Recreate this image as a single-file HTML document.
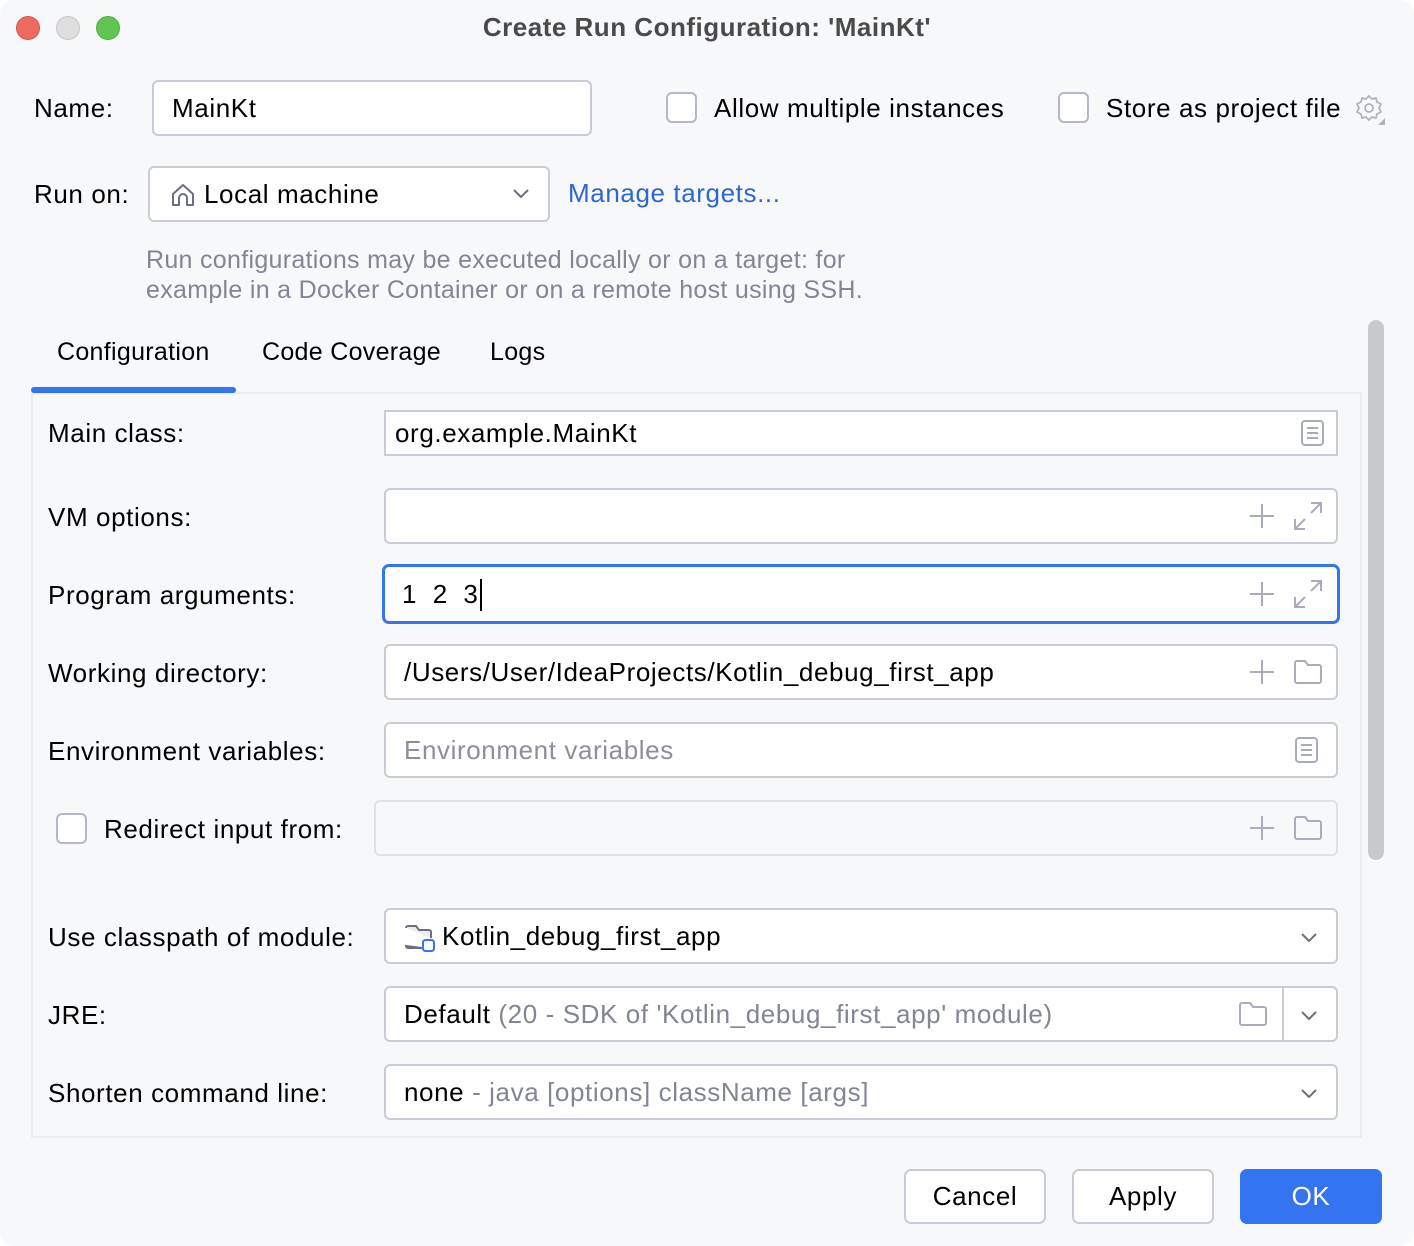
<!DOCTYPE html>
<html><head><meta charset="utf-8">
<style>
*{box-sizing:border-box;margin:0;padding:0}
html,body{width:1414px;height:1246px;background:#fff;overflow:hidden}
body{font-family:"Liberation Sans",Arial,sans-serif;font-size:26px;letter-spacing:0.6px;color:#000}
#win{position:absolute;left:0;top:0;width:1414px;height:1246px;background:#f7f8fa;border-radius:14px;overflow:hidden}
.a{position:absolute;white-space:nowrap}
.lbl{position:absolute;white-space:nowrap;line-height:30px}
.f{position:absolute;background:#fff;border:2px solid #c9ccd6;border-radius:6px}
.ft{position:absolute;left:18px;top:0;line-height:50px;white-space:nowrap}
.cb{position:absolute;width:31px;height:31px;border:2px solid #b4b8c6;border-radius:6px;background:#fff}
.g{color:#818594}
.btn{position:absolute;top:1169px;width:142px;height:55px;border:2px solid #c9ccd6;border-radius:7px;background:#fff;text-align:center;line-height:51px}
svg{position:absolute}
.tab{font-size:25px;letter-spacing:0.3px}
</style></head><body>
<div id="win">
<div class="a" style="left:16px;top:16px;width:24px;height:24px;border-radius:50%;background:#ec6a5e;border:1px solid #d25548"></div>
<div class="a" style="left:56px;top:16px;width:24px;height:24px;border-radius:50%;background:#dfdfe0;border:1px solid #c8c8ca"></div>
<div class="a" style="left:96px;top:16px;width:24px;height:24px;border-radius:50%;background:#61c554;border:1px solid #4fae44"></div>
<div class="a" style="left:0;width:1414px;top:12px;text-align:center;font-weight:bold;font-size:26px;letter-spacing:0.5px;color:#4a4a4a;line-height:30px">Create Run Configuration: 'MainKt'</div>

<div class="lbl" style="left:34px;top:93px">Name:</div>
<div class="f" style="left:152px;top:80px;width:440px;height:56px"><div class="ft" style="line-height:52px">MainKt</div></div>
<div class="cb" style="left:666px;top:92px"></div>
<div class="lbl" style="left:714px;top:93px">Allow multiple instances</div>
<div class="cb" style="left:1058px;top:92px"></div>
<div class="lbl" style="left:1106px;top:93px">Store as project file</div>
<svg style="left:1352px;top:92px" width="34" height="34" viewBox="0 0 34 34"><path d="M17 4l3 3 4-1 1 4 4 2-2 4 2 4-4 2-1 4-4-1-3 3-3-3-4 1-1-4-4-2 2-4-2-4 4-2 1-4 4 1z" fill="none" stroke="#b0b3bc" stroke-width="1.8" stroke-linejoin="round"/><circle cx="17" cy="16" r="4" fill="none" stroke="#b0b3bc" stroke-width="1.8"/><path d="M33 26v7h-7z" fill="#b0b3bc"/></svg>

<div class="lbl" style="left:34px;top:179px">Run on:</div>
<div class="f" style="left:148px;top:166px;width:402px;height:56px">
<svg style="left:20px;top:14px" width="26" height="26" viewBox="0 0 26 26"><path d="M3 12L13 3l10 9v11h-6v-7a4 4 0 0 0-8 0v7H3z" fill="none" stroke="#6c707e" stroke-width="2" stroke-linejoin="round"/></svg>
<div class="ft" style="left:54px;line-height:52px">Local machine</div>
<svg style="left:362px;top:20px" width="18" height="12" viewBox="0 0 18 12"><path d="M2 2l7 7 7-7" fill="none" stroke="#6c707e" stroke-width="2"/></svg>
</div>
<div class="lbl" style="left:568px;top:178px;color:#2f66d0">Manage targets...</div>
<div class="lbl g" style="left:146px;top:245px;font-size:25px;letter-spacing:0.3px">Run configurations may be executed locally or on a target: for</div>
<div class="lbl g" style="left:146px;top:275px;font-size:25px;letter-spacing:0.3px">example in a Docker Container or on a remote host using SSH.</div>

<div class="lbl tab" style="left:57px;top:337px">Configuration</div>
<div class="lbl tab" style="left:262px;top:337px">Code Coverage</div>
<div class="lbl tab" style="left:490px;top:337px">Logs</div>
<div class="a" style="left:31px;top:392px;width:1331px;height:746px;border:2px solid #ebecf0"></div>
<div class="a" style="left:31px;top:387px;width:205px;height:6px;background:#3574f0;border-radius:3px"></div>
<div class="a" style="left:1368px;top:320px;width:16px;height:540px;background:#c8c9cc;border-radius:8px"></div>

<div class="lbl" style="left:48px;top:418px">Main class:</div>
<div class="f" style="left:384px;top:410px;width:954px;height:46px;border-radius:0"><div class="ft" style="left:9px;line-height:42px">org.example.MainKt</div>
<svg style="left:914px;top:7px" width="26" height="28" viewBox="0 0 26 28"><rect x="2" y="2" width="21" height="24" rx="3" fill="none" stroke="#a8adbd" stroke-width="2"/><path d="M7 9h11M7 14h11M7 19h11" stroke="#a8adbd" stroke-width="2"/></svg></div>

<div class="lbl" style="left:48px;top:502px">VM options:</div>
<div class="f" style="left:384px;top:488px;width:954px;height:56px"></div>

<div class="lbl" style="left:48px;top:580px">Program arguments:</div>
<div class="f" style="left:382px;top:564px;width:958px;height:60px;border:3px solid #3574f0;border-radius:7px"><div class="ft" style="left:17px;line-height:54px">1&nbsp;&nbsp;2&nbsp;&nbsp;3</div><div class="a" style="left:95px;top:12px;width:2px;height:32px;background:#000"></div></div>

<div class="lbl" style="left:48px;top:658px">Working directory:</div>
<div class="f" style="left:384px;top:644px;width:954px;height:56px"><div class="ft" style="line-height:52px">/Users/User/IdeaProjects/Kotlin_debug_first_app</div></div>

<div class="lbl" style="left:48px;top:736px">Environment variables:</div>
<div class="f" style="left:384px;top:722px;width:954px;height:56px"><div class="ft" style="line-height:52px;color:#8c8f99">Environment variables</div>
<svg style="left:908px;top:12px" width="26" height="28" viewBox="0 0 26 28"><rect x="2" y="2" width="21" height="24" rx="3" fill="none" stroke="#a8adbd" stroke-width="2"/><path d="M7 9h11M7 14h11M7 19h11" stroke="#a8adbd" stroke-width="2"/></svg></div>

<div class="cb" style="left:56px;top:813px"></div>
<div class="lbl" style="left:104px;top:814px">Redirect input from:</div>
<div class="f" style="left:374px;top:800px;width:964px;height:56px;background:#f7f8fa;border-color:#dfe1e5"></div>

<svg style="left:1248px;top:502px" width="28" height="28" viewBox="0 0 28 28"><path d="M14 2v24M2 14h24" stroke="#a8adbd" stroke-width="2"/></svg>
<svg style="left:1292px;top:500px" width="32" height="32" viewBox="0 0 32 32"><path d="M19 3h10v10M29 3L19 13M3 19v10h10M3 29l10-10" fill="none" stroke="#a8adbd" stroke-width="2"/></svg>
<svg style="left:1248px;top:580px" width="28" height="28" viewBox="0 0 28 28"><path d="M14 2v24M2 14h24" stroke="#a8adbd" stroke-width="2"/></svg>
<svg style="left:1292px;top:578px" width="32" height="32" viewBox="0 0 32 32"><path d="M19 3h10v10M29 3L19 13M3 19v10h10M3 29l10-10" fill="none" stroke="#a8adbd" stroke-width="2"/></svg>
<svg style="left:1248px;top:658px" width="28" height="28" viewBox="0 0 28 28"><path d="M14 2v24M2 14h24" stroke="#a8adbd" stroke-width="2"/></svg>
<svg style="left:1293px;top:659px" width="30" height="26" viewBox="0 0 30 26"><path d="M2 4a2 2 0 0 1 2-2h8l3 4h11a2 2 0 0 1 2 2v14a2 2 0 0 1-2 2H4a2 2 0 0 1-2-2z" fill="none" stroke="#a8adbd" stroke-width="2"/></svg>
<svg style="left:1248px;top:814px" width="28" height="28" viewBox="0 0 28 28"><path d="M14 2v24M2 14h24" stroke="#a8adbd" stroke-width="2"/></svg>
<svg style="left:1293px;top:815px" width="30" height="26" viewBox="0 0 30 26"><path d="M2 4a2 2 0 0 1 2-2h8l3 4h11a2 2 0 0 1 2 2v14a2 2 0 0 1-2 2H4a2 2 0 0 1-2-2z" fill="none" stroke="#a8adbd" stroke-width="2"/></svg>

<div class="lbl" style="left:48px;top:922px">Use classpath of module:</div>
<div class="f" style="left:384px;top:908px;width:954px;height:56px">
<svg style="left:18px;top:14px" width="32" height="30" viewBox="0 0 32 30"><path d="M2 4a2 2 0 0 1 2-2h8l3 4h10a2 2 0 0 1 2 2v6M18 24H4a2 2 0 0 1-2-2z" fill="#ebecf0" stroke="#6c707e" stroke-width="2"/><rect x="19" y="16" width="11" height="11" rx="2.5" fill="#fff" stroke="#3574f0" stroke-width="2"/></svg>
<div class="ft" style="left:56px;line-height:52px">Kotlin_debug_first_app</div>
<svg style="left:914px;top:22px" width="18" height="12" viewBox="0 0 18 12"><path d="M2 2l7 7 7-7" fill="none" stroke="#6c707e" stroke-width="2"/></svg></div>

<div class="lbl" style="left:48px;top:1000px">JRE:</div>
<div class="f" style="left:384px;top:986px;width:954px;height:56px"><div class="ft" style="line-height:52px">Default <span class="g">(20 - SDK of 'Kotlin_debug_first_app' module)</span></div>
<svg style="left:852px;top:13px" width="30" height="26" viewBox="0 0 30 26"><path d="M2 4a2 2 0 0 1 2-2h8l3 4h11a2 2 0 0 1 2 2v14a2 2 0 0 1-2 2H4a2 2 0 0 1-2-2z" fill="none" stroke="#a8adbd" stroke-width="2"/></svg>
<div class="a" style="left:896px;top:0;width:2px;height:52px;background:#c9ccd6"></div>
<svg style="left:914px;top:22px" width="18" height="12" viewBox="0 0 18 12"><path d="M2 2l7 7 7-7" fill="none" stroke="#6c707e" stroke-width="2"/></svg></div>

<div class="lbl" style="left:48px;top:1078px">Shorten command line:</div>
<div class="f" style="left:384px;top:1064px;width:954px;height:56px"><div class="ft" style="line-height:52px">none <span class="g">- java [options] className [args]</span></div>
<svg style="left:914px;top:22px" width="18" height="12" viewBox="0 0 18 12"><path d="M2 2l7 7 7-7" fill="none" stroke="#6c707e" stroke-width="2"/></svg></div>

<div class="btn" style="left:904px">Cancel</div>
<div class="btn" style="left:1072px">Apply</div>
<div class="btn" style="left:1240px;background:#3574f0;border-color:#3574f0;color:#fff">OK</div>
</div>
</body></html>
